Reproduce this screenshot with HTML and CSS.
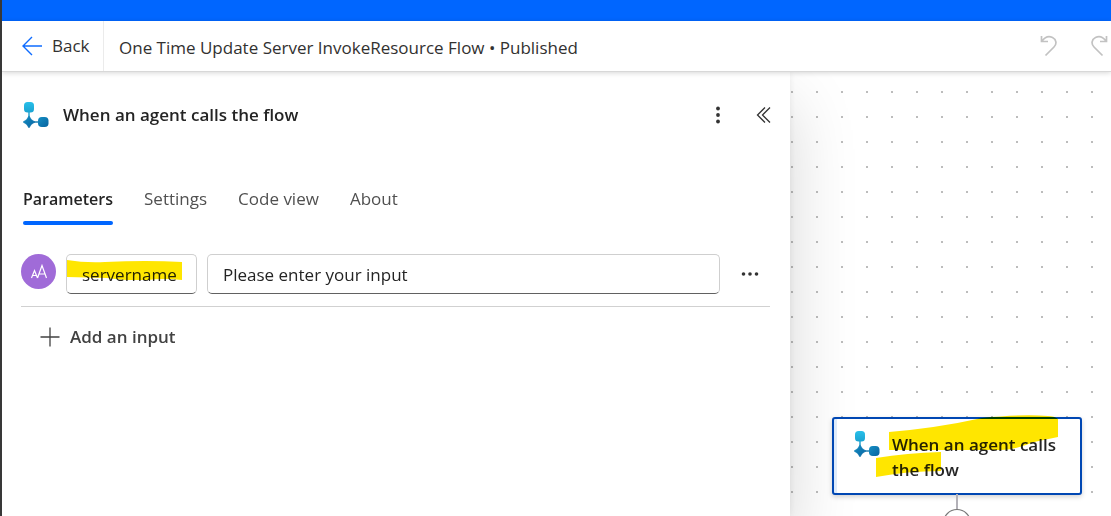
FILE: index.html
```html
<!DOCTYPE html>
<html lang="en">
<head>
<meta charset="utf-8">
<title>One Time Update Server InvokeResource Flow</title>
<link rel="stylesheet" href="styles.css">
</head>
<body>
<svg class="defs" aria-hidden="true">
  <defs>
    <linearGradient id="light" x1="0" y1="0" x2="0" y2="1"><stop offset="0" stop-color="#28bfe9"/><stop offset="1" stop-color="#1ba3d2"/></linearGradient>
    <linearGradient id="deep" x1="0" y1="0" x2="1" y2="1"><stop offset="0" stop-color="#158fc4"/><stop offset="1" stop-color="#0863a0"/></linearGradient>
    <symbol id="flow" viewBox="0 0 26 26">
      <path d="M6 10v5" stroke="#1b9ccb" stroke-width="1.4"/>
      <path d="M11 20h5" stroke="#1278ad" stroke-width="1.4"/>
      <rect x="1" y="0" width="10" height="10.5" rx="3.5" fill="url(#light)"/>
      <path d="M6 13.800L8.400 17.600L12 20L8.400 22.400L6 26L3.600 22.400L0 20L3.600 17.600Z" fill="url(#deep)" stroke="url(#deep)" stroke-width=".5" stroke-linejoin="round"/>
      <rect x="15" y="15" width="10.500" height="10" rx="3.800" fill="url(#deep)"/>
    </symbol>
  </defs>
</svg>
<div class="app">
  <div class="brandbar"></div>
  <header class="toolbar">
    <button class="back" type="button">
      <svg width="21" height="20" viewBox="0 0 21 20" fill="none" stroke="#0f6cff" stroke-width="1.400"><path d="M10 1L1 10l9 9M1 10h19"/></svg>
      <span>Back</span>
    </button>
    <h1 class="title">One Time Update Server InvokeResource Flow • Published</h1>
    <div class="history">
      <button type="button" aria-label="Undo"><svg width="18" height="22" viewBox="0 0 18 22" fill="none" stroke="#c2c2c2" stroke-width="1.700"><path d="M1.500 1v5.500H8M2 6C5 2 9 .8 12.500 2.500C16.500 4.500 17 9 14 12L5.500 20.500"/></svg></button>
      <button type="button" aria-label="Redo"><svg width="18" height="22" viewBox="0 0 18 22" fill="none" stroke="#c2c2c2" stroke-width="1.700"><path d="M16.500 1v5.500H10M16 6C13 2 9 .8 5.500 2.500C1.500 4.500 1 9 4 12l8.500 8.500"/></svg></button>
    </div>
  </header>
  <div class="workspace">
    <section class="panel">
      <div class="panel-head">
        <svg class="flow-icon"><use href="#flow"/></svg>
        <h2>When an agent calls the flow</h2>
        <button type="button" aria-label="More commands"><svg width="6" height="18" viewBox="0 0 6 18" fill="#333"><circle cx="3" cy="2.500" r="1.900"/><circle cx="3" cy="9" r="1.900"/><circle cx="3" cy="15.500" r="1.900"/></svg></button>
        <button type="button" aria-label="Collapse"><svg width="16" height="18" viewBox="0 0 16 18" fill="none" stroke="#333" stroke-width="1.300"><path d="M9 1.500L1.500 9L9 16.500M14 1.500L6.500 9l7.500 7.500"/></svg></button>
      </div>
      <nav class="tabs">
        <button class="active" type="button">Parameters</button>
        <button type="button">Settings</button>
        <button type="button">Code view</button>
        <button type="button">About</button>
      </nav>
      <div class="input-row">
        <svg class="type-icon" viewBox="0 0 35 35" role="img" aria-label="Text">
          <circle cx="17.500" cy="17.500" r="17.500" fill="#a06bd8"/>
          <g fill="none" stroke="#fff" stroke-width="1.200"><path d="M10.500 24l3-7.500 3 7.500M11.500 21.500h4M16.500 24L21 11.500 25.500 24M18 20h6"/></g>
        </svg>
        <div class="name-field">
          <input type="text" value="servername" aria-label="Input name">
          <svg class="mark" viewBox="0 0 116 20" fill="#ffe600"><path d="M0 0Q18 3 38 2Q80 0 115 2V20Q98 18 80 20Q60 21 40 18L0 17Z"/></svg>
        </div>
        <input class="value-field" type="text" value="Please enter your input" aria-label="Input description">
        <button type="button" aria-label="Input options"><svg width="18" height="6" viewBox="0 0 18 6" fill="#333"><circle cx="2.500" cy="3" r="1.800"/><circle cx="9" cy="3" r="1.800"/><circle cx="15.500" cy="3" r="1.800"/></svg></button>
      </div>
      <button class="add" type="button">
        <svg width="20" height="20" viewBox="0 0 20 20" stroke="#424242" stroke-width="1.300"><path d="M10 .5v19M.5 10h19"/></svg>
        <span>Add an input</span>
      </button>
    </section>
    <main class="canvas">
      <div class="node">
        <svg class="flow-icon"><use href="#flow"/></svg>
        <span>When an agent calls the flow</span>
        <svg class="node-mark" viewBox="0 0 250 77" fill="#ffe600"><path d="M57 15Q105 11 150 1Q190-3 216-1Q222-1 226 2V20L202 25Q180 34 165 33H57Z"/><path d="M44 41Q75 36 109 35V54Q75 54 44 60Z"/></svg>
      </div>
      <svg class="connector" viewBox="0 0 30 45" fill="none"><path d="M15 0v16" stroke="#b3b1b8" stroke-width="2"/><circle cx="15" cy="29" r="13.500" fill="#fff" stroke="#777" stroke-width="1.200"/><path d="M15 22v14M8 29h14" stroke="#0f6cff"/></svg>
    </main>
  </div>
</div>
</body>
</html>
```
FILE: styles.css
```css
* { box-sizing: border-box; }
body {
  margin: 0;
  font-family: "Open Sans", "Noto Sans", sans-serif;
  font-size: 17px;
  line-height: 24px;
  color: #323130;
  background: #fff;
}
button {
  font: inherit;
  color: inherit;
  background: none;
  border: 0;
  padding: 0;
  display: flex;
  align-items: center;
}
h1, h2 { margin: 0; font-size: 17px; font-weight: 400; }
.defs { position: absolute; width: 0; height: 0; }
.app {
  height: 100vh;
  display: flex;
  flex-direction: column;
  border-left: 2px solid #383838;
  overflow: hidden;
}
.brandbar { flex: none; height: 21px; background: #0066ff; }
.toolbar {
  position: relative;
  z-index: 2;
  flex: none;
  height: 51px;
  display: flex;
  align-items: stretch;
  background: #fff;
  border-bottom: 1px solid #d8d8d8;
  box-shadow: 0 1px 5px rgba(0, 0, 0, .16);
}
.back { width: 102px; padding-left: 20px; gap: 9px; border-right: 1px solid #ebebeb; }
.title { flex: 1; padding: 15px 0 0 15px; white-space: nowrap; }
.history { display: flex; gap: 32px; padding-right: 3px; }
.workspace { flex: 1; min-height: 0; display: flex; }
.panel {
  position: relative;
  z-index: 1;
  flex: 0 0 71.05%;
  padding: 28px 20px 0 19px;
  background: #fff;
  box-shadow: 0 32px 64px rgba(0, 0, 0, .16), 0 0 8px rgba(0, 0, 0, .08);
}
.panel-head { display: flex; align-items: center; height: 30px; padding-left: 2px; margin-right: -2px; }
.panel-head h2 { flex: 1; padding-left: 14px; font-weight: 600; color: #242424; }
.panel-head button + button { margin-left: 35px; }
.flow-icon { flex: none; width: 26px; height: 26px; }
.tabs { display: flex; gap: 31px; padding: 53px 0 0 2px; color: #505050; }
.tabs button { height: 42px; padding-bottom: 7px; border-bottom: 4px solid transparent; }
.tabs .active { font-size: 16px; font-weight: 600; color: #242424; position: relative; }
.tabs .active::after {
  content: "";
  position: absolute;
  left: 0;
  right: 0;
  bottom: -4px;
  height: 4px;
  border-radius: 2px;
  background: #0066ff;
}
.input-row {
  display: flex;
  align-items: flex-start;
  gap: 10px;
  padding: 29px 11px 12px 0;
  border-bottom: 1px solid #d1d1d1;
}
.input-row input {
  height: 40px;
  min-width: 0;
  padding: 0 15px;
  font: inherit;
  color: #242424;
  background: #fff;
  border: 1px solid #cfcfcf;
  border-bottom-color: #616161;
  border-radius: 5px;
}
.input-row button { height: 40px; margin-left: 11px; }
.type-icon { flex: none; width: 35px; height: 35px; }
.name-field { position: relative; flex: 0 0 131px; }
.name-field input { width: 100%; }
.input-row .value-field { flex: 1; }
.mark { position: absolute; left: 1px; top: 6px; width: 116px; height: 20px; mix-blend-mode: multiply; }
.add { margin: 18px 0 0 19px; gap: 10px; font-weight: 600; color: #424242; }
.canvas {
  flex: 1;
  position: relative;
  background-image: radial-gradient(circle at 2px 2px, #bcbcbc 1px, transparent 1px);
  background-size: 25px 25px;
  background-position: 0 18px;
}
.node {
  position: absolute;
  z-index: 2;
  left: 42px;
  top: 345px;
  width: 250px;
  display: flex;
  gap: 12px;
  padding: 13px 16px 11px 20px;
  line-height: 25px;
  font-weight: 600;
  color: #242424;
  background: #fff;
  border: 2px solid #0047b3;
  border-radius: 3px;
  box-shadow: inset 3px 0 #deebfa, 0 2px 5px rgba(0, 0, 0, .18);
}
.node .flow-icon { margin-top: -1px; }
.node-mark { position: absolute; left: -2px; top: -2px; width: 250px; height: 77px; overflow: visible; mix-blend-mode: multiply; }
.connector { position: absolute; z-index: 2; left: 152px; top: 422px; width: 30px; height: 45px; }
```
